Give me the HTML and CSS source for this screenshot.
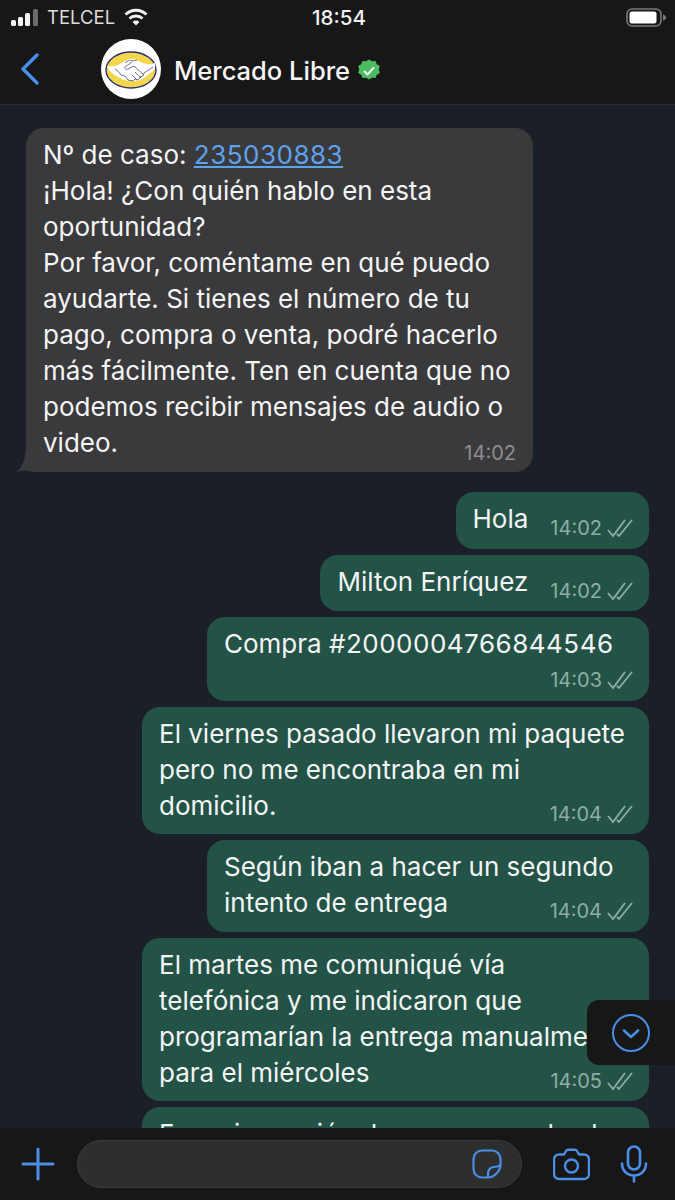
FILE: index.html
```html
<!DOCTYPE html>
<html lang="es">
<head>
  <meta charset="UTF-8">
  <title>Mercado Libre</title>
  <link rel="stylesheet" href="styles.css">
</head>
<body>
  <div class="app">
    <div class="top-bar">
      <div class="status-bar">
        <div class="status-left">
          <svg class="signal" width="28" height="18" viewBox="0 0 28 18">
            <rect x="0" y="12" width="5" height="6" rx="1.5" fill="#f2f2f2"/>
            <rect x="7" y="9" width="5" height="9" rx="1.5" fill="#f2f2f2"/>
            <rect x="14" y="5" width="5" height="13" rx="1.5" fill="#f2f2f2"/>
            <rect x="22" y="1" width="5" height="17" rx="1.5" fill="#6b6b6b"/>
          </svg>
          <span class="carrier">TELCEL</span>
          <svg class="wifi" width="24" height="18" viewBox="0 0 24 18" fill="none" stroke="#f2f2f2" stroke-width="3">
            <path d="M1.5 6.500a15 15 0 0 1 21 0"/>
            <path d="M5.500 10.500a9.500 9.500 0 0 1 13 0"/>
            <path d="M12 17.500l-3.400-3.600a4.800 4.800 0 0 1 6.800 0z" fill="#f2f2f2" stroke="none"/>
          </svg>
        </div>
        <div class="clock">18:54</div>
        <div class="status-right">
          <svg width="41" height="19" viewBox="0 0 41 19">
            <rect x="1" y="1" width="34" height="17" rx="5" fill="none" stroke="#7a7a7a" stroke-width="1.600"/>
            <rect x="3.500" y="3.500" width="27" height="12" rx="2.500" fill="#fff"/>
            <path d="M37 6.500c2 .5 3 1.500 3 3s-1 2.500-3 3z" fill="#7a7a7a"/>
          </svg>
        </div>
      </div>
      <div class="nav-bar">
        <svg class="back" width="20" height="32" viewBox="0 0 20 32" fill="none" stroke="#4a8fe7" stroke-width="3.400" stroke-linecap="round" stroke-linejoin="round">
          <path d="M17 2L3 16l14 14"/>
        </svg>
        <svg class="avatar" width="60" height="60" viewBox="0 0 60 60">
          <circle cx="30" cy="30" r="30" fill="#fff"/>
          <ellipse cx="30" cy="31" rx="25" ry="18" fill="#f3d64a" stroke="#2d3277" stroke-width="1.400"/>
          <path d="M6 27c5 1 9 0 13-2 4-3 8-5 12-5s8 3 11 4 8 2 12 0c1 3 0 6-2 8l-9 7c-6 4-16 4-22 1-6-3-13-7-15-13z" fill="#fff"/>
          <path d="M14 30l3 2 3 4 4 1 3 4 5 1 2-2 3 1 2-3 3-1 1-3 9-6M24 24c3-3 6-3 9-2l3-1M31 23l-7 5c-1 2 1 3 3 2l6-3 10 9M34 33l6 6M31 36l5 5" fill="none" stroke="#5c6288" stroke-width=".9"/>
        </svg>
        <span class="contact-name">Mercado Libre</span>
        <svg class="verified" width="24" height="24" viewBox="0 0 24 24">
          <path d="M12 .5l3 1.800 3.500-.3 1.300 3.200 3 1.900-1 3.400 1 3.400-3 1.900-1.300 3.200-3.500-.3-3 1.800-3-1.800-3.500.3-1.300-3.200-3-1.900 1-3.400-1-3.400 3-1.900 1.300-3.200 3.500.3z" fill="#4dbb62"/>
          <path d="M7.500 12.500l3 3 6-6.500" fill="none" stroke="#e6f5e9" stroke-width="2.200" stroke-linecap="round" stroke-linejoin="round"/>
        </svg>
      </div>
    </div>

    <div class="chat">
      <div class="bubble in wide grouped">
        <div class="text">Nº de caso: <a class="num" href="#">235030883</a><br>¡Hola! ¿Con quién hablo en esta<br>oportunidad?<br>Por favor, coméntame en qué puedo<br>ayudarte. Si tienes el número de tu<br>pago, compra o venta, podré hacerlo<br>más fácilmente. Ten en cuenta que no<br>podemos recibir mensajes de audio o<br>video.</div>
        <div class="meta"><span class="time">14:02</span></div>
      </div>

      <div class="bubble out row short">
        <div class="text">Hola</div>
        <div class="meta"><span class="time">14:02</span><svg class="ticks"><use href="#ticks"/></svg></div>
      </div>
      <div class="bubble out row">
        <div class="text">Milton Enríquez</div>
        <div class="meta"><span class="time">14:02</span><svg class="ticks"><use href="#ticks"/></svg></div>
      </div>
      <div class="bubble out stack mid">
        <div class="text">Compra <span class="num">#2000004766844546</span></div>
        <div class="meta"><span class="time">14:03</span><svg class="ticks"><use href="#ticks"/></svg></div>
      </div>
      <div class="bubble out wide">
        <div class="text">El viernes pasado llevaron mi paquete<br>pero no me encontraba en mi<br>domicilio.</div>
        <div class="meta"><span class="time">14:04</span><svg class="ticks"><use href="#ticks"/></svg></div>
      </div>
      <div class="bubble out mid tall">
        <div class="text">Según iban a hacer un segundo<br>intento de entrega</div>
        <div class="meta"><span class="time">14:04</span><svg class="ticks"><use href="#ticks"/></svg></div>
      </div>
      <div class="bubble out wide">
        <div class="text">El martes me comuniqué vía<br>telefónica y me indicaron que<br>programarían la entrega manualmente<br>para el miércoles</div>
        <div class="meta"><span class="time">14:05</span><svg class="ticks"><use href="#ticks"/></svg></div>
      </div>
      <div class="bubble out wide">
        <div class="text">Fue mi reacción de ver que no dan la</div>
      </div>

      <div class="scroll-down">
        <svg width="40" height="40" viewBox="0 0 40 40" fill="none" stroke="#4a8fe7">
          <circle cx="20" cy="20" r="18" stroke-width="2"/>
          <path d="M13 17.500l7 6.500 7-6.500" stroke-width="2.600" stroke-linecap="round" stroke-linejoin="round"/>
        </svg>
      </div>
    </div>

    <div class="input-bar">
      <svg class="plus" width="34" height="34" viewBox="0 0 34 34" stroke="#4a8fe7" stroke-width="3" stroke-linecap="round">
        <path d="M17 2v30M2 17h30"/>
      </svg>
      <div class="input-box">
        <svg width="30" height="30" viewBox="0 0 30 30" fill="none" stroke="#4a8fe7" stroke-width="2.200" stroke-linejoin="round">
          <path d="M10 1.500h10a8.500 8.500 0 0 1 8.500 8.500v6C28.500 22 22 28.500 16 28.500h-6A8.500 8.500 0 0 1 1.500 20V10A8.500 8.500 0 0 1 10 1.500z"/>
          <path d="M28.500 16c-2.500 2-5 2-7 2-3 0-5.500 3-5.500 6.500 0 1.500 0 3 .5 4"/>
        </svg>
      </div>
      <svg class="camera" width="37" height="33" viewBox="0 0 37 33" fill="none" stroke="#4a8fe7" stroke-width="2.400" stroke-linejoin="round">
        <path d="M6 6.500h5l2-3.500c.5-.9 1-1.300 2-1.300h7c1 0 1.500.4 2 1.300l2 3.500h5a5 5 0 0 1 5 5V26a5 5 0 0 1-5 5H6a5 5 0 0 1-5-5V11.500a5 5 0 0 1 5-5z"/>
        <circle cx="18.500" cy="18" r="6.500"/>
      </svg>
      <svg class="mic" width="28" height="38" viewBox="0 0 28 38" fill="none" stroke="#4a8fe7" stroke-width="2.600" stroke-linecap="round">
        <rect x="8" y="1.500" width="12" height="23" rx="6"/>
        <path d="M2 18.500c0 7 5 12 12 12s12-5 12-12M14 30.500v6"/>
      </svg>
    </div>
  </div>

  <svg class="defs" width="0" height="0">
    <symbol id="ticks" viewBox="0 0 26 20">
      <path d="M1 12l5 6L18 2M10 16l2 2L25 2" fill="none" stroke="currentColor" stroke-width="1.800"/>
    </symbol>
  </svg>
</body>
</html>
```

FILE: styles.css
```css
* {
  box-sizing: border-box;
}

body {
  margin: 0;
  background-color: #1a1f28;
  font-family: Inter, "Liberation Sans", sans-serif;
}

.app {
  display: flex;
  flex-direction: column;
  width: 675px;
  height: 1200px;
  overflow: hidden;
}

.defs {
  position: absolute;
}

.top-bar {
  flex: none;
  height: 105px;
  background-color: #171717;
  border-bottom: 1px solid #2b2c2e;
}

.status-bar {
  display: grid;
  grid-template-columns: 1fr auto 1fr;
  align-items: center;
  height: 34px;
  padding: 0 8px 0 11px;
  color: #f2f2f2;
}

.status-left {
  display: flex;
  align-items: center;
}

.carrier {
  margin-left: 8px;
  font-size: 18.5px;
  color: #dcdcdc;
}

.wifi {
  margin-left: 9px;
}

.clock {
  font-size: 20.5px;
  font-weight: 500;
}

.status-right {
  display: flex;
  justify-content: flex-end;
}

.nav-bar {
  display: flex;
  align-items: center;
  height: 70px;
  padding-left: 20px;
}

.avatar {
  margin-left: 61px;
}

.contact-name {
  margin-left: 13px;
  padding-top: 3px;
  font-size: 25.5px;
  font-weight: 500;
  color: #f5f5f5;
}

.verified {
  margin-left: 7px;
  margin-top: 3px;
}

.chat {
  position: relative;
  flex: 1;
  min-height: 0;
  overflow: hidden;
  display: flex;
  flex-direction: column;
  gap: 6px;
  padding: 23px 26px 0;
}

.bubble {
  flex: none;
  position: relative;
  padding: 9px 16px 10px 17px;
  border-radius: 18px;
  font-size: 26px;
  line-height: 36px;
  color: #f4f4f4;
}

.text {
  white-space: nowrap;
}

.text a {
  color: #5ea2ee;
}

.num {
  letter-spacing: 0.5px;
}

.bubble.in {
  align-self: flex-start;
  display: grid;
  padding-bottom: 11px;
  background-color: #3a3a3c;
}

.bubble.grouped {
  margin-bottom: 14px;
}

/* cola de la burbuja */
.bubble.in::before {
  content: "";
  position: absolute;
  left: -10px;
  bottom: 0;
  width: 28px;
  height: 28px;
  background-color: #3a3a3c;
  clip-path: path("M0 28C6 24 10 16 10 0H28V28H16C12 26 8 26 0 28Z");
}

.bubble.out {
  align-self: flex-end;
  display: grid;
  background-color: #235347;
}

.bubble.wide {
  width: 507px;
}

.bubble.mid {
  width: 442px;
}

.bubble.tall {
  padding-bottom: 11px;
}

.bubble.row {
  display: flex;
  gap: 22px;
  padding-bottom: 11px;
}

.bubble.short {
  padding-bottom: 12px;
}

.bubble.stack {
  display: block;
  padding-bottom: 11px;
}

.bubble .text,
.bubble .meta {
  grid-area: 1 / 1;
}

.meta {
  display: flex;
  align-items: center;
  justify-content: flex-end;
  align-self: end;
  gap: 5px;
  height: 20px;
  font-size: 20px;
  line-height: 20px;
  color: #8fada5;
}

.bubble.in .meta {
  margin: 0 1px -2px 0;
  color: #8e8e90;
}

.bubble.row .meta {
  margin-bottom: -1px;
}

.bubble.stack .meta {
  margin-top: 8px;
}

.ticks {
  width: 26px;
  height: 20px;
}

.scroll-down {
  position: absolute;
  right: 0;
  top: 895px;
  display: flex;
  align-items: center;
  width: 88px;
  height: 65px;
  padding-left: 24px;
  background-color: #171717;
  border-radius: 12px 0 0 12px;
}

.input-bar {
  flex: none;
  display: flex;
  align-items: center;
  height: 72px;
  padding-left: 21px;
  background-color: #171717;
}

.input-box {
  display: flex;
  align-items: center;
  justify-content: flex-end;
  width: 445px;
  height: 48px;
  margin-left: 22px;
  padding-right: 19px;
  background-color: #2e2e2f;
  border: 1px solid #3c3c3d;
  border-radius: 24px;
}

.camera {
  margin-left: 31px;
}

.mic {
  margin-left: 30px;
}
```
